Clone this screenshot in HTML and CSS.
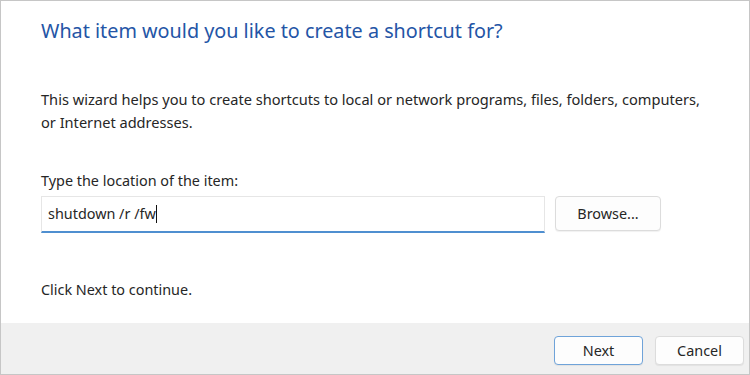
FILE: index.html
```html
<!DOCTYPE html>
<html lang="en">
<head>
	<meta charset="UTF-8">
	<title>Create Shortcut</title>
	<link rel="stylesheet" href="styles.css">
</head>
<body>
	<div class="dialog">
		<div class="main">
			<h1 class="title">What item would you like to create a shortcut for?</h1>
			<p class="intro">This wizard helps you to create shortcuts to local or network programs, files, folders, computers, or Internet addresses.</p>
			<label class="label" for="location">Type the location of the item:</label>
			<div class="row">
				<div class="field"><span id="location">shutdown /r /fw</span><span class="caret"></span></div>
				<button type="button" class="btn browse">Browse...</button>
			</div>
			<p class="hint">Click Next to continue.</p>
		</div>
		<div class="footer">
			<button type="button" class="btn primary">Next</button>
			<button type="button" class="btn">Cancel</button>
		</div>
	</div>
</body>
</html>
```
FILE: styles.css
```css
*{
	margin: 0;
	padding: 0;
	box-sizing: border-box;
	font-family: "Noto Sans", "Open Sans", sans-serif;
}
body{
	background-color: #fff;
}
.dialog{
	width: 750px;
	height: 375px;
	border: 1px solid #c6c6c6;
	display: flex;
	flex-direction: column;
	background-color: #fff;
}
.main{
	flex: 1;
	padding: 16px 40px 0;
	color: #262626;
}
.title{
	font-size: 19.8px;
	line-height: 28px;
	font-weight: normal;
	color: #2455a6;
}
.intro{
	margin-top: 43px;
	font-size: 14.6px;
	line-height: 23px;
	width: 668px;
}
.label{
	display: block;
	margin-top: 35px;
	font-size: 14.4px;
	line-height: 23px;
}
.row{
	margin-top: 4px;
	display: flex;
	align-items: flex-start;
	gap: 10px;
}
.field{
	width: 504px;
	height: 37px;
	border: 1px solid #e6e6e6;
	border-bottom: 2px solid #4f8fd0;
	padding: 0 6px;
	font-size: 14.4px;
	line-height: 34px;
	display: flex;
	align-items: center;
}
.caret{
	display: inline-block;
	width: 1px;
	height: 18px;
	background-color: #111;
}
.btn{
	height: 29px;
	width: 89px;
	border: 1px solid #dcdcdc;
	border-radius: 4px;
	background-color: #fdfdfd;
	font-size: 14.4px;
	color: #262626;
	box-shadow: 0 1px 1px rgba(0,0,0,0.06);
}
.browse{
	width: 106px;
	height: 35px;
}
.primary{
	border-color: #6fa3d9;
}
.hint{
	margin-top: 45px;
	font-size: 14.4px;
	line-height: 23px;
}
.footer{
	height: 51px;
	background-color: #f0f0f0;
	display: flex;
	justify-content: flex-end;
	align-items: flex-start;
	gap: 12px;
	padding: 13px 5px 0 0;
}
```
